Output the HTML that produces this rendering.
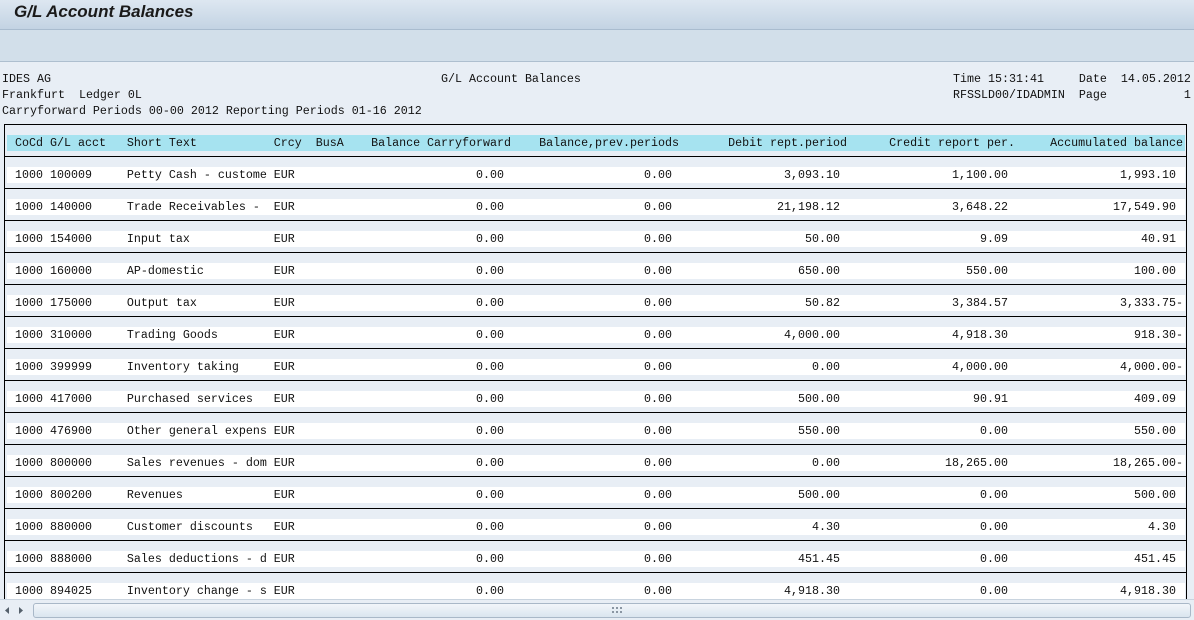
<!DOCTYPE html>
<html><head><meta charset="utf-8"><style>
*{margin:0;padding:0;box-sizing:border-box}
body{width:1194px;height:620px;overflow:hidden;background:#e8eef5;position:relative;font-family:"Liberation Mono",monospace;font-size:11.67px;color:#111}
#title{position:absolute;left:0;top:0;width:1194px;height:30px;background:linear-gradient(#dde7f1,#c3d3e3);border-bottom:1px solid #a9bccf}
#title span{position:absolute;left:14px;top:2px;font:italic bold 17px "Liberation Sans",sans-serif;color:#1a1a1a}
#tool{position:absolute;left:0;top:30px;width:1194px;height:32px;background:#d2dfea;border-bottom:1px solid #aebfcf}
.t{position:absolute;white-space:pre;line-height:16px}
.r{position:absolute;white-space:pre;line-height:16px;text-align:right}
.c{position:absolute;white-space:pre;line-height:32px;text-align:right;top:159px}
#box{position:absolute;left:4px;top:124px;width:1183px;height:480px;border:1px solid #000;border-bottom:none}
#hdr{position:absolute;left:7px;top:135px;width:1178px;height:16px;background:#a6e3f0}
.row{position:absolute;left:5px;width:1181px;height:32px;border-top:1px solid #000}
.row i{position:absolute;left:2px;top:10px;width:1178px;height:16px;background:#fff}
#sb{position:absolute;left:0;top:599px;width:1194px;height:21px;background:#e8eef5;border-top:1px solid #c9d4df}
#track{position:absolute;left:33px;top:3px;width:1158px;height:15px;border:1px solid #a9b8c8;border-radius:3px;background:linear-gradient(#f2f6fa,#dae5ef)}
</style></head><body>
<div id="title"><span>G/L Account Balances</span></div>
<div id="tool"></div>
<div class="t" style="left:2px;top:71px">IDES AG</div>
<div class="t" style="left:2px;top:87px">Frankfurt  Ledger 0L</div>
<div class="t" style="left:2px;top:103px">Carryforward Periods 00-00 2012 Reporting Periods 01-16 2012</div>
<div class="t" style="left:441px;top:71px">G/L Account Balances</div>
<div class="t" style="left:953px;top:71px">Time 15:31:41     Date  14.05.2012</div>
<div class="t" style="left:953px;top:87px">RFSSLD00/IDADMIN  Page           1</div>
<div id="box"></div>
<div id="hdr"></div>
<div class="t" style="left:15px;top:135px">CoCd G/L acct   Short Text           Crcy  BusA</div>
<div class="r" style="right:683px;top:135px">Balance Carryforward</div>
<div class="r" style="right:515px;top:135px">Balance,prev.periods</div>
<div class="r" style="right:347px;top:135px">Debit rept.period</div>
<div class="r" style="right:179px;top:135px">Credit report per.</div>
<div class="r" style="right:11px;top:135px">Accumulated balance</div>

<div class="row" style="top:156px"><i></i></div>
<div class="row" style="top:188px"><i></i></div>
<div class="row" style="top:220px"><i></i></div>
<div class="row" style="top:252px"><i></i></div>
<div class="row" style="top:284px"><i></i></div>
<div class="row" style="top:316px"><i></i></div>
<div class="row" style="top:348px"><i></i></div>
<div class="row" style="top:380px"><i></i></div>
<div class="row" style="top:412px"><i></i></div>
<div class="row" style="top:444px"><i></i></div>
<div class="row" style="top:476px"><i></i></div>
<div class="row" style="top:508px"><i></i></div>
<div class="row" style="top:540px"><i></i></div>
<div class="row" style="top:572px"><i></i></div>

<div class="t" style="left:15px;top:167px">1000 100009     Petty Cash - custome EUR</div>
<div class="t" style="left:15px;top:199px">1000 140000     Trade Receivables -  EUR</div>
<div class="t" style="left:15px;top:231px">1000 154000     Input tax            EUR</div>
<div class="t" style="left:15px;top:263px">1000 160000     AP-domestic          EUR</div>
<div class="t" style="left:15px;top:295px">1000 175000     Output tax           EUR</div>
<div class="t" style="left:15px;top:327px">1000 310000     Trading Goods        EUR</div>
<div class="t" style="left:15px;top:359px">1000 399999     Inventory taking     EUR</div>
<div class="t" style="left:15px;top:391px">1000 417000     Purchased services   EUR</div>
<div class="t" style="left:15px;top:423px">1000 476900     Other general expens EUR</div>
<div class="t" style="left:15px;top:455px">1000 800000     Sales revenues - dom EUR</div>
<div class="t" style="left:15px;top:487px">1000 800200     Revenues             EUR</div>
<div class="t" style="left:15px;top:519px">1000 880000     Customer discounts   EUR</div>
<div class="t" style="left:15px;top:551px">1000 888000     Sales deductions - d EUR</div>
<div class="t" style="left:15px;top:583px">1000 894025     Inventory change - s EUR</div>

<div class="c" style="right:690px">0.00<br>0.00<br>0.00<br>0.00<br>0.00<br>0.00<br>0.00<br>0.00<br>0.00<br>0.00<br>0.00<br>0.00<br>0.00<br>0.00</div>
<div class="c" style="right:522px">0.00<br>0.00<br>0.00<br>0.00<br>0.00<br>0.00<br>0.00<br>0.00<br>0.00<br>0.00<br>0.00<br>0.00<br>0.00<br>0.00</div>
<div class="c" style="right:354px">3,093.10<br>21,198.12<br>50.00<br>650.00<br>50.82<br>4,000.00<br>0.00<br>500.00<br>550.00<br>0.00<br>500.00<br>4.30<br>451.45<br>4,918.30</div>
<div class="c" style="right:186px">1,100.00<br>3,648.22<br>9.09<br>550.00<br>3,384.57<br>4,918.30<br>4,000.00<br>90.91<br>0.00<br>18,265.00<br>0.00<br>0.00<br>0.00<br>0.00</div>
<div class="c" style="right:11px">1,993.10 <br>17,549.90 <br>40.91 <br>100.00 <br>3,333.75-<br>918.30-<br>4,000.00-<br>409.09 <br>550.00 <br>18,265.00-<br>500.00 <br>4.30 <br>451.45 <br>4,918.30 </div>

<div id="sb">
<svg width="34" height="20" style="position:absolute;left:0;top:0"><path d="M9 7 L5 10.5 L9 14Z" fill="#55606b"/><path d="M19 7 L23 10.5 L19 14Z" fill="#55606b"/></svg>
<div id="track"><svg width="12" height="8" style="position:absolute;left:578px;top:3px"><g fill="#8a96a3"><rect x="0" y="0" width="2" height="2"/><rect x="4" y="0" width="2" height="2"/><rect x="8" y="0" width="2" height="2"/><rect x="0" y="4" width="2" height="2"/><rect x="4" y="4" width="2" height="2"/><rect x="8" y="4" width="2" height="2"/></g></svg></div>
</div>
</body></html>
